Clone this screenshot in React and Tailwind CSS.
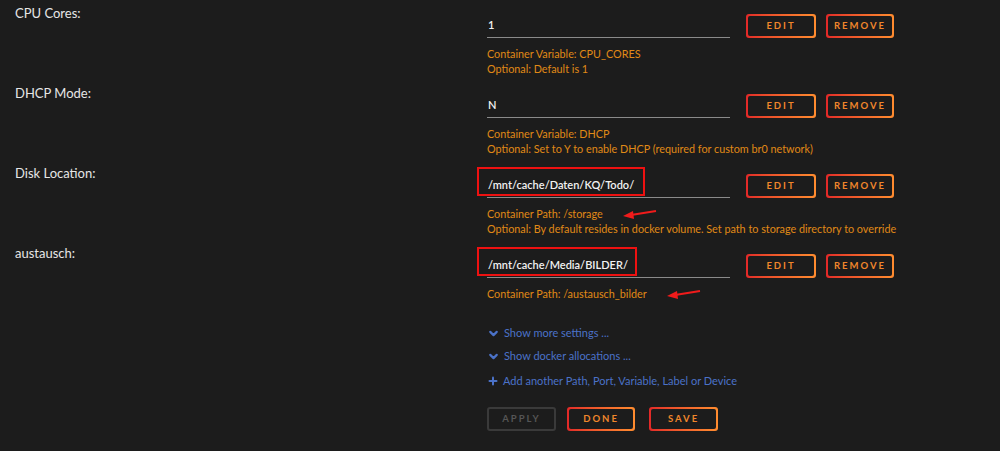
import { ChevronDown, Plus } from 'lucide-react'

const ROWS = [
  {
    label: 'CPU Cores:',
    value: '1',
    notes: ['Container Variable: CPU_CORES', 'Optional: Default is 1'],
  },
  {
    label: 'DHCP Mode:',
    value: 'N',
    notes: ['Container Variable: DHCP', 'Optional: Set to Y to enable DHCP (required for custom br0 network)'],
  },
  {
    label: 'Disk Location:',
    value: '/mnt/cache/Daten/KQ/Todo/',
    notes: ['Container Path: /storage', 'Optional: By default resides in docker volume. Set path to storage directory to override'],
    box: 'w-[168px]',
    arrow: true,
  },
  {
    label: 'austausch:',
    value: '/mnt/cache/Media/BILDER/',
    notes: ['Container Path: /austausch_bilder'],
    box: 'w-[160px]',
    arrow: true,
  },
]

function GradButton({ children, w, disabled }) {
  if (disabled) {
    return (
      <div className={`${w} h-[24px] rounded-[3px] border-2 border-[#3a3a3a] flex items-center justify-center text-[9.5px] font-bold tracking-[2px] text-[#555]`}>
        {children}
      </div>
    )
  }
  return (
    <div className={`${w} h-[24px] rounded-[3px] p-[2px] bg-gradient-to-r from-[#e22828] to-[#ff8c2f]`}>
      <div className="w-full h-full rounded-[2px] bg-[#1c1c1c] flex items-center justify-center text-[9.5px] font-bold tracking-[2px] text-[#f0862b]">
        {children}
      </div>
    </div>
  )
}

function Arrow() {
  return (
    <svg width="34" height="10" viewBox="0 0 34 10" className="ml-[20px]">
      <line x1="33" y1="2" x2="8" y2="6" stroke="#f01b1b" strokeWidth="2" />
      <polygon points="0,7 10,2 11,10" fill="#f01b1b" />
    </svg>
  )
}

export default function App() {
  return (
    <div className="w-[1000px] h-[451px] bg-[#1c1c1c] overflow-hidden font-['Lato',sans-serif]">
      {ROWS.map((r) => (
        <div key={r.label} className="flex h-[80px]">
          <div className="w-[487px] pl-[15px] pt-[5px] text-[13px] leading-[16px] text-[#e6e6e6]">{r.label}</div>
          <div className="pt-[14px]">
            <div className="flex items-center">
              <div className="relative w-[243px] h-[24px] border-b border-[#8a8a8a] flex items-center pl-px text-[11px] font-semibold text-[#f2f2f2]">
                {r.value}
                {r.box && (
                  <div className={`absolute left-[-10px] top-[-7px] ${r.box} h-[29px] border-2 border-[#ee1111]`} />
                )}
              </div>
              <div className="ml-[16px]"><GradButton w="w-[70px]">EDIT</GradButton></div>
              <div className="ml-[10px]"><GradButton w="w-[68px]">REMOVE</GradButton></div>
            </div>
            <div className="mt-[8px] text-[10.8px] leading-[15px] text-[#e08a16]">
              {r.notes.map((n, i) => (
                <div key={n} className="flex items-center">
                  {n}
                  {r.arrow && i === 0 && <Arrow />}
                </div>
              ))}
            </div>
          </div>
        </div>
      ))}
      <div className="pl-[487px] text-[11px] text-[#4b72c8]">
        <div className="flex items-center h-[16px] mt-[5px] gap-[4px]">
          <ChevronDown size={13} strokeWidth={4} />
          <span>Show more settings ...</span>
        </div>
        <div className="flex items-center h-[16px] mt-[7px] gap-[4px]">
          <ChevronDown size={13} strokeWidth={4} />
          <span>Show docker allocations ...</span>
        </div>
        <div className="flex items-center h-[16px] mt-[9px] gap-[4px]">
          <Plus size={12} strokeWidth={4} />
          <span>Add another Path, Port, Variable, Label or Device</span>
        </div>
        <div className="flex mt-[18px]">
          <GradButton w="w-[69px]" disabled>APPLY</GradButton>
          <div className="ml-[11px]"><GradButton w="w-[68px]">DONE</GradButton></div>
          <div className="ml-[14px]"><GradButton w="w-[69px]">SAVE</GradButton></div>
        </div>
      </div>
    </div>
  )
}
